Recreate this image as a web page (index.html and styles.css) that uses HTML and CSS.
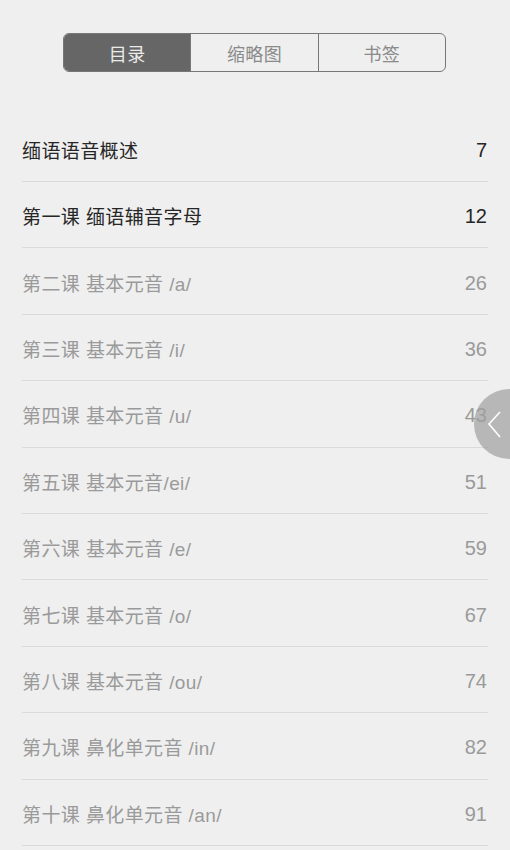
FILE: index.html
```html
<!DOCTYPE html>
<html lang="zh">
<head>
<meta charset="utf-8">
<link rel="stylesheet" href="styles.css">
</head>
<body>
<div class="page">
  <div class="tabs">
    <div class="tab active">目录</div>
    <div class="tab">缩略图</div>
    <div class="tab">书签</div>
  </div>
  <ul class="toc">
    <li class="row dark"><span class="title">缅语语音概述</span><span class="num">7</span></li>
    <li class="row dark"><span class="title">第一课 缅语辅音字母</span><span class="num">12</span></li>
    <li class="row"><span class="title">第二课 基本元音 /a/</span><span class="num">26</span></li>
    <li class="row"><span class="title">第三课 基本元音 /i/</span><span class="num">36</span></li>
    <li class="row"><span class="title">第四课 基本元音 /u/</span><span class="num">43</span></li>
    <li class="row"><span class="title">第五课 基本元音/ei/</span><span class="num">51</span></li>
    <li class="row"><span class="title">第六课 基本元音 /e/</span><span class="num">59</span></li>
    <li class="row"><span class="title">第七课 基本元音 /o/</span><span class="num">67</span></li>
    <li class="row"><span class="title">第八课 基本元音 /ou/</span><span class="num">74</span></li>
    <li class="row"><span class="title">第九课 鼻化单元音 /in/</span><span class="num">82</span></li>
    <li class="row"><span class="title">第十课 鼻化单元音 /an/</span><span class="num">91</span></li>
  </ul>
  <div class="handle">
    <svg width="24" height="30" viewBox="0 0 24 30"><polyline points="13,3 2,15 13,28" fill="none" stroke="#fff" stroke-width="1.6"/></svg>
  </div>
</div>
</body>
</html>
```
FILE: styles.css
```css
html, body {
  margin: 0;
  padding: 0;
  background: #efefef;
}
.page {
  position: relative;
  width: 510px;
  height: 850px;
  overflow: hidden;
  font-family: "Liberation Sans", "Noto Sans CJK SC", sans-serif;
}
.tabs {
  display: flex;
  margin: 33px 0 0 63px;
  width: 383px;
  height: 39px;
  box-sizing: border-box;
  border: 1.5px solid #777;
  border-radius: 6px;
  overflow: hidden;
}
.tab {
  flex: 1;
  display: flex;
  align-items: center;
  justify-content: center;
  font-size: 18px;
  color: #8a8a8a;
  border-left: 1.5px solid #777;
  letter-spacing: 0.3px;
}
.tab:first-child { border-left: none; }
.tab.active {
  background: #666;
  color: #eaeaea;
}
.toc {
  list-style: none;
  margin: 43.6px 22px 0 22px;
  padding: 0;
}
.row {
  display: flex;
  justify-content: space-between;
  align-items: center;
  height: 66.4px;
  border-bottom: 1px solid #dadada;
  font-size: 19px;
  color: #9a9a9a;
  padding-top: 2px;
  box-sizing: border-box;
}
.row.dark { color: #262626; }
.title { letter-spacing: 0.4px; }
.num { font-size: 20px; padding: 2px 1px 0 0; }
.handle {
  position: absolute;
  left: 474px;
  top: 389px;
  width: 70px;
  height: 70px;
  border-radius: 50%;
  background: rgba(160,160,160,0.7);
  display: flex;
  align-items: center;
  padding-left: 13px;
  box-sizing: border-box;
}
.handle svg { display: block; }
```
